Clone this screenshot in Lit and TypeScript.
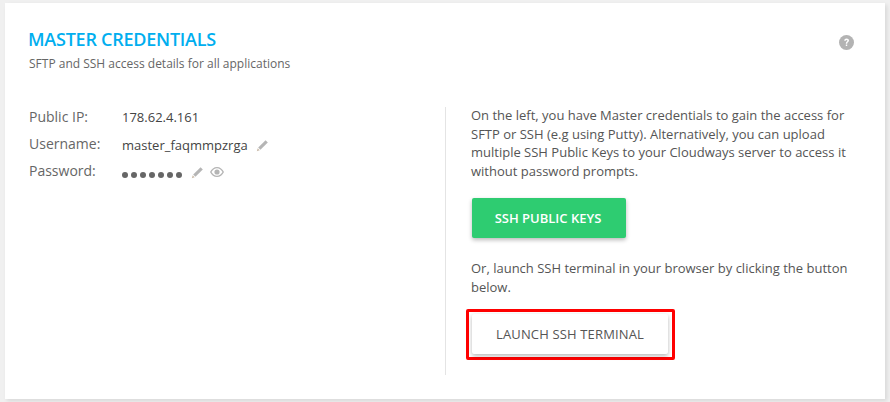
import { LitElement, html, css } from 'lit';
import { customElement } from 'lit/decorators.js';

const pencil = html`<svg class="icon" width="13" height="13" viewBox="0 0 13 13">
  <path d="M9.6 1.2 11.8 3.4 4.4 10.8 2.2 8.6Z" fill="#b5b5b5"></path>
  <path d="M1.7 9.3 3.7 11.3 .8 12.2Z" fill="#c9b9a8"></path>
</svg>`;

@customElement('app-root')
export class AppRoot extends LitElement {
  static styles = css`
    :host {
      display: block;
      width: 890px;
      height: 402px;
      box-sizing: border-box;
      padding: 3px 5px;
      background: #f0f0f0;
      font-family: 'Open Sans', sans-serif;
      color: #555;
      overflow: hidden;
    }
    .card {
      position: relative;
      height: 396px;
      box-sizing: border-box;
      padding: 25px 24px 0;
      background: #fff;
      box-shadow: 2px 2px 4px rgba(0, 0, 0, 0.1);
    }
    h1 {
      margin: 0 0 0 -1px;
      font-size: 18px;
      line-height: 22px;
      font-weight: 600;
      letter-spacing: -0.24px;
      color: #00aeef;
    }
    .sub {
      margin: 5px 0 0;
      font-size: 12px;
      line-height: 18px;
      color: #666;
    }
    .help {
      position: absolute;
      top: 32px;
      right: 31px;
    }
    .cols {
      display: grid;
      grid-template-columns: 416px 1fr;
      margin-top: 34px;
    }
    .rows {
      display: flex;
      flex-direction: column;
      font-size: 14px;
    }
    .row {
      display: flex;
      height: 27px;
      align-items: flex-start;
      line-height: 20px;
    }
    .label {
      width: 93px;
      color: #666;
    }
    .value {
      display: flex;
      align-items: center;
      height: 20px;
      margin-top: 1px;
      font-size: 13px;
      color: #444;
    }
    .row:first-child .value {
      margin-top: 0;
    }
    .icon {
      flex: none;
    }
    .value .icon {
      margin-left: 8px;
    }
    .value .dots + .icon {
      margin-left: 9px;
    }
    .value .eye {
      margin-left: 6px;
    }
    .dots {
      display: flex;
      gap: 3px;
      margin-top: 5px;
    }
    .dots i {
      width: 6px;
      height: 6px;
      border-radius: 50%;
      background: #666;
    }
    .right {
      height: 268px;
      box-sizing: border-box;
      padding-left: 25px;
      border-left: 1px solid #e4e4e4;
      font-size: 13px;
      line-height: 18.57px;
      color: #555;
    }
    .right p {
      margin: 0;
    }
    .right p.intro {
      margin-top: -1px;
    }
    .btn {
      display: flex;
      align-items: center;
      justify-content: center;
      box-sizing: border-box;
      height: 40px;
      border-radius: 2px;
      font-size: 13px;
      box-shadow: 0 2px 4px rgba(0, 0, 0, 0.28);
    }
    .green {
      width: 154px;
      margin: 18px 0 21px 1px;
      padding-right: 2px;
      background: #2ecc71;
      color: #fff;
      font-weight: 600;
    }
    .launch-box {
      width: 209px;
      height: 51px;
      box-sizing: border-box;
      margin: 13px 0 0 -5px;
      padding: 2px 0 0 3px;
      border: 3px solid #f00;
      border-radius: 2px;
    }
    .launch-box .btn {
      width: 196px;
      background: #fff;
      color: #555;
      letter-spacing: 0.15px;
    }
  `;

  render() {
    return html`
      <div class="card">
        <h1>MASTER CREDENTIALS</h1>
        <p class="sub">SFTP and SSH access details for all applications</p>
        <svg class="help" width="15" height="15" viewBox="0 0 15 15">
          <circle cx="7.5" cy="7.5" r="7.5" fill="#b3b3b3"></circle>
          <path d="M5.2 5.8C5.3 4.4 6.3 3.6 7.6 3.6 9 3.6 10 4.5 10 5.6 10 7.2 8.2 7.2 8.2 8.7H6.8C6.8 6.6 8.4 6.6 8.4 5.7 8.4 5.3 8.1 5 7.6 5 7.1 5 6.8 5.3 6.7 5.8Z M6.8 9.6H8.2V11.1H6.8Z" fill="#fff"></path>
        </svg>
        <div class="cols">
          <div class="rows">
            <div class="row"><span class="label">Public IP:</span><span class="value">178.62.4.161</span></div>
            <div class="row"><span class="label">Username:</span><span class="value">master_faqmmpzrga ${pencil}</span></div>
            <div class="row">
              <span class="label">Password:</span>
              <span class="value">
                <span class="dots"><i></i><i></i><i></i><i></i><i></i><i></i><i></i></span>
                ${pencil}
                <svg class="icon eye" width="14" height="10" viewBox="0 0 14 10">
                  <path fill-rule="evenodd" fill="#b5b5b5" d="M7 0C10 0 12.6 2 14 5 12.6 8 10 10 7 10 4 10 1.400 8 0 5 1.400 2 4 0 7 0ZM7 1.200C4.800 1.200 2.800 2.700 1.500 5 2.800 7.300 4.800 8.800 7 8.800 9.200 8.800 11.200 7.300 12.500 5 11.200 2.700 9.200 1.200 7 1.200ZM7 2.400A2.600 2.600 0 1 1 7 7.600 2.600 2.600 0 1 1 7 2.400Z"></path>
                </svg>
              </span>
            </div>
          </div>
          <div class="right">
            <p class="intro">On the left, you have Master credentials to gain the access for<br>SFTP or SSH (e.g using Putty). Alternatively, you can upload<br>multiple SSH Public Keys to your Cloudways server to access it<br>without password prompts.</p>
            <div class="btn green">SSH PUBLIC KEYS</div>
            <p>Or, launch SSH terminal in your browser by clicking the button<br>below.</p>
            <div class="launch-box"><div class="btn">LAUNCH SSH TERMINAL</div></div>
          </div>
        </div>
      </div>
    `;
  }
}
